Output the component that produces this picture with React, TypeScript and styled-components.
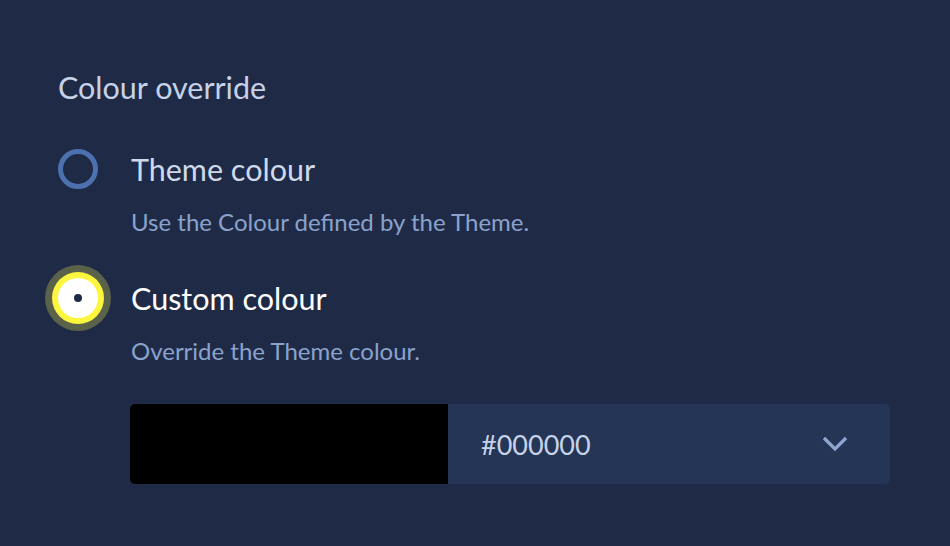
import React, { useState } from "react";
import styled, { createGlobalStyle } from "styled-components";

const GlobalStyle = createGlobalStyle`
  html, body {
    margin: 0;
    padding: 0;
    background: #1f2b46;
  }
  body {
    font-family: Lato, "Noto Sans", sans-serif;
    -webkit-font-smoothing: antialiased;
  }
`;

const Page = styled.div`
  width: 950px;
  height: 546px;
  box-sizing: border-box;
  padding: 69px 60px 0 58px;
  background: #1f2b46;
`;

const Fieldset = styled.fieldset`
  border: 0;
  margin: 0;
  padding: 0;
  display: flex;
  flex-direction: column;
`;

const Legend = styled.legend`
  padding: 0;
  margin: 0 0 44px;
  font-size: 30.5px;
  line-height: 36px;
  color: #c6d2e8;
`;

const Option = styled.label`
  display: grid;
  grid-template-columns: 40px 1fr;
  column-gap: 33px;
  align-items: center;
  cursor: pointer;
`;

const Radio = styled.span<{ $checked: boolean }>`
  width: 40px;
  height: 40px;
  box-sizing: border-box;
  border-radius: 50%;
  display: flex;
  align-items: center;
  justify-content: center;
  border: ${(p) => (p.$checked ? "0" : "5px solid #4c71ae")};
  background: ${(p) => (p.$checked ? "#ffffff" : "transparent")};
  box-shadow: ${(p) =>
    p.$checked ? "0 0 0 6px #fdf63f, 0 0 0 13px #5b624a" : "none"};

  &::after {
    content: "";
    display: ${(p) => (p.$checked ? "block" : "none")};
    width: 8px;
    height: 8px;
    border-radius: 50%;
    background: #1f2b46;
  }
`;

const Label = styled.span<{ $checked: boolean }>`
  font-size: 30.5px;
  line-height: 36px;
  color: ${(p) => (p.$checked ? "#ffffff" : "#d0d9ea")};
`;

const Hint = styled.div`
  margin: 19px 0 0 73px;
  font-size: 24px;
  line-height: 28px;
  color: #8aa2cc;
`;

const OptionBlock = styled.div`
  display: flex;
  flex-direction: column;
  & + & {
    margin-top: 42px;
  }
`;

const ColourField = styled.div`
  display: flex;
  margin: 39px 0 0 72px;
  height: 80px;
`;

const Swatch = styled.div<{ $colour: string }>`
  width: 318px;
  border-radius: 5px 0 0 5px;
  background: ${(p) => p.$colour};
`;

const HexSelect = styled.div`
  flex: 1;
  display: flex;
  align-items: center;
  justify-content: space-between;
  padding: 0 42px 0 33px;
  background: #253556;
  border-radius: 0 5px 5px 0;
  font-size: 27px;
  color: #c6d2e8;
`;

const Chevron = () => (
  <svg width="26" height="16" viewBox="0 0 26 16" fill="none">
    <path d="M2 2l11 11L24 2" stroke="#8ea6d2" strokeWidth="3.2" />
  </svg>
);

export default function App() {
  const [mode, setMode] = useState<"theme" | "custom">("custom");
  const options = [
    {
      id: "theme" as const,
      label: "Theme colour",
      hint: "Use the Colour defined by the Theme.",
    },
    {
      id: "custom" as const,
      label: "Custom colour",
      hint: "Override the Theme colour.",
    },
  ];

  return (
    <>
      <GlobalStyle />
      <Page>
        <Fieldset>
          <Legend>Colour override</Legend>
          {options.map((o) => (
            <OptionBlock key={o.id}>
              <Option onClick={() => setMode(o.id)}>
                <Radio $checked={mode === o.id} />
                <Label $checked={mode === o.id}>{o.label}</Label>
              </Option>
              <Hint>{o.hint}</Hint>
            </OptionBlock>
          ))}
          <ColourField>
            <Swatch $colour="#000000" />
            <HexSelect>
              <span>#000000</span>
              <Chevron />
            </HexSelect>
          </ColourField>
        </Fieldset>
      </Page>
    </>
  );
}
